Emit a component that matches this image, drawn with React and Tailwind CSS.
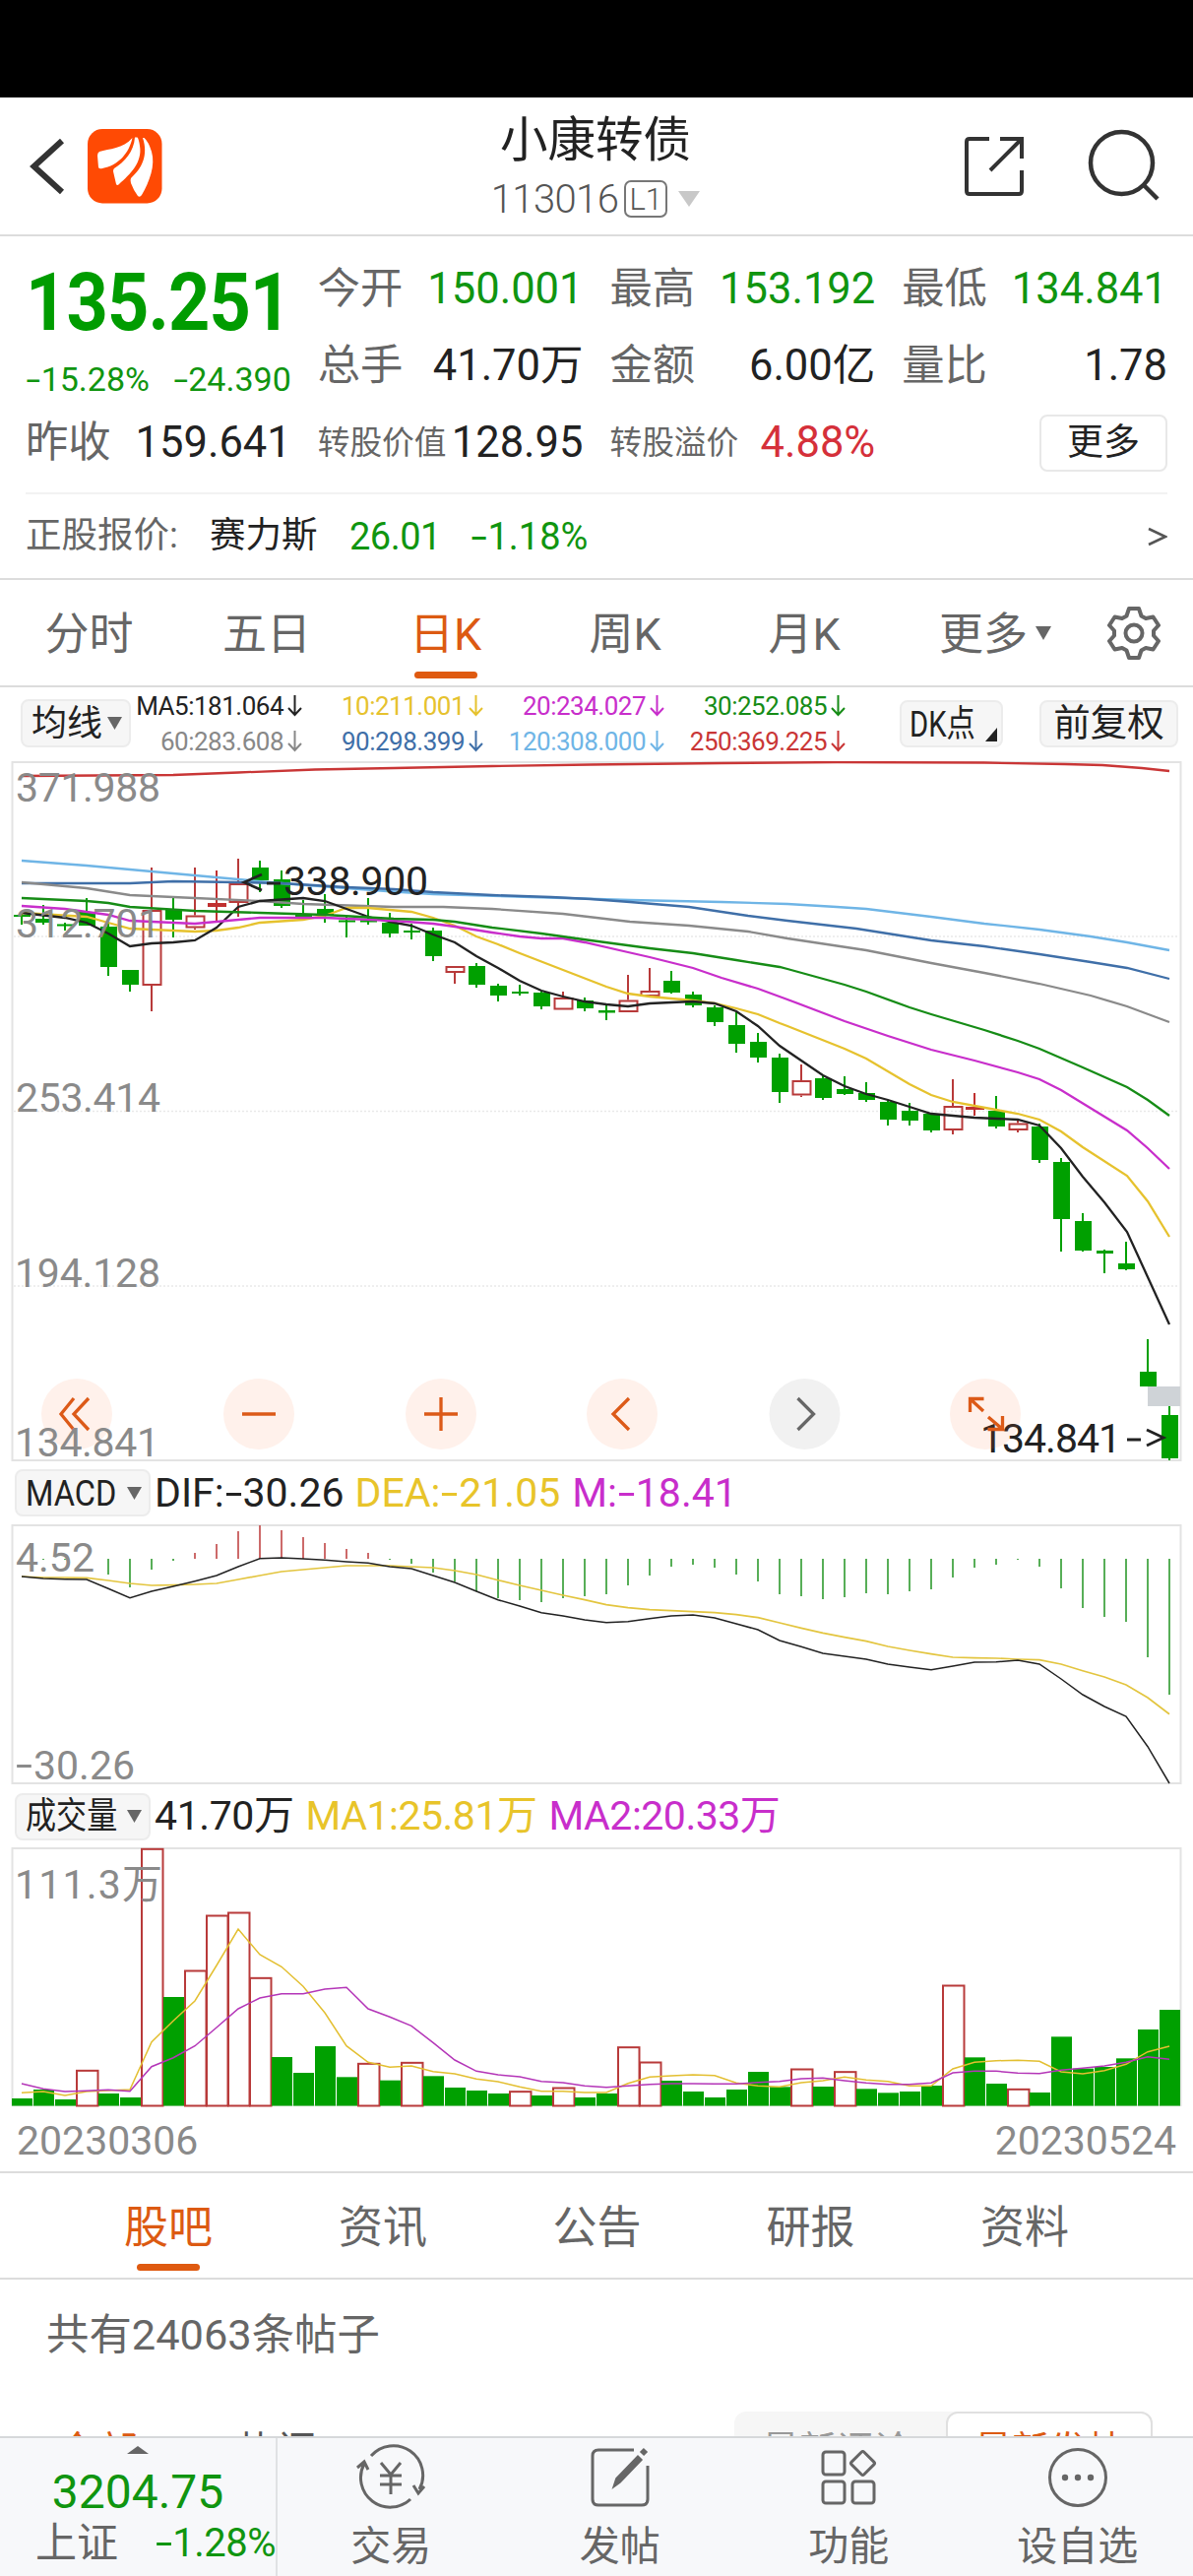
import React from "react";

const GREEN = "#00a000";
const RED = "#b83a3a";

const bx = (i) => 22 + 22 * i;

// [kind, high, bodyTop, bodyBottom, low]; kinds: g = falling, r = hollow rising, s = flat rising
const CANDLES = [
  ["g", 928, 929, 931, 939], ["g", 919, 933, 937, 939], ["g", 937, 938.5, 940.5, 945], ["g", 912, 926, 940, 940],
  ["g", 938, 941, 982, 991], ["g", 985, 985, 1000, 1007], ["r", 881, 924, 1001, 1027], ["g", 911, 923, 934, 952],
  ["r", 881, 929.5, 942.5, 944], ["s", 884, 917, 921, 935], ["r", 872, 897, 917, 931], ["g", 874, 881, 894, 906],
  ["g", 884, 893, 920, 922], ["g", 914, 929, 931, 931], ["g", 908, 923, 930, 937], ["g", 930, 934.5, 936.5, 952],
  ["g", 912, 934.5, 936.5, 939], ["g", 927, 937, 948, 952], ["g", 938, 945, 947, 954], ["g", 942, 945, 971, 976],
  ["r", 981, 981, 988, 999], ["g", 978, 981, 1000, 1003], ["g", 999, 1001, 1011, 1017], ["g", 1000, 1007, 1009, 1011],
  ["g", 1007, 1008, 1022, 1025], ["r", 1007, 1013, 1025.5, 1025], ["g", 1013, 1016, 1024, 1027], ["g", 1020, 1026, 1028.5, 1036],
  ["r", 990, 1015.5, 1028, 1027], ["r", 983, 1006, 1012, 1011], ["g", 986, 996, 1008, 1009], ["g", 1007, 1010, 1021, 1023],
  ["g", 1021, 1023, 1038, 1042], ["g", 1028, 1041, 1060, 1069], ["g", 1049, 1058, 1074, 1079], ["g", 1070, 1074, 1109, 1120],
  ["r", 1081, 1097, 1112.5, 1114], ["g", 1093, 1095, 1115, 1117], ["g", 1093, 1106, 1111, 1112], ["g", 1099, 1110, 1117, 1119],
  ["g", 1118, 1119, 1137, 1143], ["g", 1120, 1128, 1138, 1143], ["g", 1130, 1131, 1148, 1150], ["r", 1096, 1123, 1148, 1152],
  ["s", 1110, 1124, 1127, 1133], ["g", 1113, 1128, 1144, 1146], ["r", 1138, 1140.5, 1148, 1150], ["g", 1141, 1144, 1178, 1181],
  ["g", 1176, 1180, 1238, 1271], ["g", 1232, 1240, 1270, 1271], ["g", 1269, 1270, 1273, 1293], ["g", 1261, 1283, 1289, 1290],
  ["g", 1360, 1393, 1408, 1408], ["g", 1428, 1437, 1481, 1483],
];

const MA_LINES = [
  ["#c93636", "22,788 176,787 242,784.5 320,781.5 400,780 500,778 600,776.5 733,775 850,774 1000,774.5 1082,776 1120,777 1160,780 1188,783"],
  ["#6fb5e6", "22,874 88,879 132,883 198,889 242,893 286,897 352,902 400,905.5 440,908 540,911 640,914 733,916 800,918 850,921 880,923 946,931 1000,938 1056,944 1108,951 1145,957 1188,965"],
  ["#3f6fa8", "22,897 132,897 176,895 242,896 286,897 352,901 400,903 440,906 500,909 560,911 600,913 640,916 700,921 760,930 800,935 870,943 946,955 1000,961 1056,969 1108,977 1145,983 1188,994"],
  ["#8a8a8a", "22,896 66,900 88,902 132,909 198,912 264,915 308,918 400,921 450,921 500,923 572,928 640,936 700,940 760,946 800,953 880,965 946,978 1000,988 1056,999 1108,1011 1145,1022 1188,1038"],
  ["#e6c22e", "22,927 88,931 110,937 132,943 176,945 198,946 220,945 242,942 264,937 308,934 330,930 352,922 374,922 418,926 440,932 462,940 484,951 506,959 528,968 572,985 616,1002 638,1009 660,1012 704,1016 726,1019 748,1024 770,1030 792,1039 800,1042 858,1065 880,1075 924,1101 946,1112 968,1119 1012,1127 1034,1131 1056,1137 1078,1149 1100,1165 1145,1194 1166,1220 1188,1256"],
  ["#222", "22,927 66,932 88,937 110,948 132,961 154,958 176,957 198,955 220,942 242,921 264,915 308,912 330,915 352,923 374,931 396,936 418,940 440,949 462,957 484,971 506,983 528,996 550,1006 572,1012 594,1017 616,1020 638,1022 660,1019 682,1018 704,1017 726,1019 748,1027 770,1042 792,1062 814,1077 836,1092 858,1103 880,1111 902,1117 924,1124 946,1131 968,1133 990,1135 1034,1137 1056,1143 1078,1166 1100,1195 1122,1221 1145,1251 1188,1345"],
  ["#c82ecb", "22,920 66,923 110,929 132,935 198,938 220,936 264,932 330,932 400,935 440,938 462,941 500,947 528,951 550,953 572,953 594,957 638,967 660,972 704,983 733,993 770,1004 800,1015 858,1037 902,1052 946,1066 990,1077 1034,1089 1056,1096 1078,1107 1145,1148 1166,1166 1188,1187"],
  ["#168c16", "22,912 88,915 110,917 132,921 198,925 264,927 330,929 400,933 440,934 462,936 500,942 550,948 600,955 660,963 704,968 748,975 792,982 800,984 858,1000 880,1007 924,1023 946,1030 1000,1046 1034,1057 1056,1065 1100,1084 1145,1104 1166,1117 1188,1133"],
];

const HIST = [
  1584, 1584, 1584, 1584, 1599, 1612, 1594, 1585, 1577, 1568, 1555, 1549, 1554, 1561, 1567, 1573, 1577, 1584, 1588, 1597,
  1606, 1616, 1623, 1625, 1627, 1623, 1621, 1619, 1610, 1600, 1591, 1589, 1592, 1599, 1606, 1619, 1621, 1624, 1622, 1618,
  1619, 1616, 1614, 1602, 1592, 1589, 1584, 1591, 1613, 1633, 1642, 1647, 1683, 1721,
];
const DIF = [
  213, 219, 221, 222, 250, 278, 258, 243, 227, 210, 183, 158, 156, 159, 163, 168, 172, 183, 189, 210, 231, 258, 284, 303, 323,
  333, 345, 353, 350, 341, 333, 330, 339, 357, 375, 408, 427, 447, 456, 465, 480, 489, 497, 486, 474, 473, 468, 480, 525, 573,
  609, 639, 731, 843,
];
const DEA = [
  213, 216, 216, 217, 225, 234, 240, 239, 237, 234, 222, 210, 198, 192, 186, 180, 180, 180, 183, 186, 195, 207, 224, 240, 255,
  270, 284, 299, 308, 314, 317, 320, 323, 329, 338, 354, 370, 385, 398, 410, 426, 438, 449, 459, 461, 462, 465, 467, 480, 500,
  519, 543, 582, 632,
];
const VOL = [
  933, 906, 936, 847, 918, 930, 172, 624, 543, 375, 366, 565, 807, 855, 774, 868, 826, 878, 823, 865, 900, 909, 918, 911, 924,
  900, 930, 918, 776, 822, 879, 912, 930, 906, 852, 898, 843, 897, 851, 904, 916, 912, 894, 588, 808, 888, 904, 915, 745, 842,
  837, 811, 723, 663,
];
const VOL_UP = [3, 6, 8, 9, 10, 11, 16, 18, 23, 25, 28, 29, 36, 38, 43, 46];
const VMA1 = [
  916, 912, 924, 912, 909, 906, 761, 697, 636, 528, 417, 495, 532, 592, 672, 773, 823, 838, 834, 851, 858, 874, 882, 898, 911,
  911, 915, 915, 887, 868, 864, 861, 863, 886, 895, 898, 885, 879, 868, 877, 881, 895, 895, 843, 823, 818, 817, 820, 852, 858,
  848, 829, 791, 774,
];
const VMA2 = [
  888, 904, 912, 910, 907, 911, 836, 809, 773, 717, 660, 627, 614, 614, 600, 595, 660, 685, 712, 763, 816, 850, 861, 867, 881,
  885, 895, 899, 895, 890, 888, 888, 889, 889, 884, 881, 873, 871, 879, 886, 890, 890, 886, 855, 850, 850, 856, 857, 847, 841,
  834, 823, 806, 814,
];
const series = (arr, base) => arr.map((v, i) => `${bx(i)},${(base + v / 3).toFixed(1)}`).join(" ");

// Number text whose minus sign is drawn wider than the font's hyphen
const Num = ({ children }) => {
  const [head, tail] = children.split("-");
  if (tail === undefined) return children;
  return (
    <>
      {head}
      <span className="inline-block w-[0.46em] scale-x-[1.55] text-center">-</span>
      {tail}
    </>
  );
};

function Header() {
  return (
    <header className="flex h-[141px] items-center border-b-2 border-[#dcdcdc] bg-white">
      <div className="flex w-[300px] items-center pl-[28px]">
        <svg width="40" height="60" viewBox="28 139 40 60" fill="none" stroke="#333" strokeWidth="6">
          <path d="M63 143 L34.500 169 L63 195" />
        </svg>
        <svg className="ml-[21px]" width="76" height="76" viewBox="0 0 76 76">
          <rect width="75.500" height="75.500" rx="15" fill="#ff4a04" />
          <path d="M45.500 9 C36 20 22 20 12 23 Q10 24 10 27 L11 39 Q12 41 15 40 C31 37 42 25 45.500 9 Z" fill="#fff" />
          <path d="M48 8.500 C47 23 38 33 27 40 Q26 41 26 43 L29 56 Q30 58 32 56 C43 46 56 34 53 17 Q52 10 50.500 8.500 Z" fill="#fff" />
          <path d="M56 9 C62 27 55 40 44 50 Q43 52 44 55 Q47 63 51 68 Q53 70 55 67 C63 53 69 37 65 23 Q62 13 57.500 9 Z" fill="#fff" />
        </svg>
      </div>
      <div className="flex flex-1 flex-col items-center pt-[4px]">
        <div className="text-[48.500px] leading-[56px] text-[#222]">小康转债</div>
        <div className="mt-[7px] flex h-[48px] items-center">
          <span className="pt-[2px] text-[40px] font-light leading-none tracking-[-0.6px] text-[#555]">113016</span>
          <span className="ml-[6px] flex h-[38px] w-[44px] items-center justify-center rounded-[7px] border-2 border-[#777] text-[31px] font-light leading-none text-[#555]">L1</span>
          <svg className="ml-[11px]" width="22" height="16" viewBox="0 0 22 16"><path d="M0 0H22L11 16Z" fill="#c8c8c8" /></svg>
        </div>
      </div>
      <div className="flex w-[302px] items-center justify-end pr-[31px]">
        <svg width="64" height="64" viewBox="978 137 64 64" fill="none" stroke="#333" strokeWidth="4">
          <path d="M1005 141 H985 Q982 141 982 144 V194 Q982 197 985 197 H1035 Q1038 197 1038 194 V173 M1016 141 H1038 V161 M1037 142 L1006 173" />
        </svg>
        <svg className="ml-[63px]" width="76" height="76" viewBox="1104 131 76 76" fill="none" stroke="#333" strokeWidth="4.500">
          <circle cx="1138.500" cy="165.500" r="31.500" />
          <path d="M1161 188 L1175 202" />
        </svg>
      </div>
    </header>
  );
}

const Quote = ({ label, value, tone = "text-[#222]", small }) => (
  <div className="flex h-[78px] items-center justify-between whitespace-nowrap">
    <span className={small ? "text-[32.700px] text-[#666]" : "text-[43.300px] text-[#666]"}>{label}</span>
    <span className={`text-[43.500px] ${tone}`}>{value}</span>
  </div>
);

function Quotes() {
  const g = "text-[#109510]";
  return (
    <section className="grid h-[260px] grid-cols-4 content-start gap-x-[27px] pl-[26px] pr-[26px] pt-[15px] leading-none">
      <div>
        <div className="flex h-[104px] items-center">
          <span className="w-[300px] origin-left scale-x-[0.912] whitespace-nowrap text-[81px] font-bold tracking-[-1px] text-[#009c00]">135.251</span>
        </div>
        <div className="flex h-[52px] items-center justify-between whitespace-nowrap text-[34px] text-[#109510]">
          <span><Num>-15.28%</Num></span>
          <span><Num>-24.390</Num></span>
        </div>
        <Quote label="昨收" value="159.641" />
      </div>
      <div>
        <Quote label="今开" value="150.001" tone={g} />
        <Quote label="总手" value="41.70万" />
        <Quote label="转股价值" value="128.95" small />
      </div>
      <div>
        <Quote label="最高" value="153.192" tone={g} />
        <Quote label="金额" value="6.00亿" />
        <Quote label="转股溢价" value="4.88%" tone="text-[#d5303a]" small />
      </div>
      <div>
        <Quote label="最低" value="134.841" tone={g} />
        <Quote label="量比" value="1.78" />
        <div className="flex h-[78px] items-center justify-end">
          <span className="flex h-[58px] w-[130px] items-center justify-center rounded-[8px] border-2 border-[#e8e8e8] pb-[2px] text-[37px] text-[#222]">更多</span>
        </div>
      </div>
    </section>
  );
}

function Underlying() {
  return (
    <section className="h-[89px] border-b-2 border-[#dcdcdc] px-[26px] leading-none">
      <div className="flex h-full items-center border-t-2 border-[#f2f2f2]">
        <span className="w-[187px] text-[36.500px] text-[#666]">正股报价:</span>
        <span className="w-[142px] text-[36.500px] text-[#222]">赛力斯</span>
        <span className="w-[123px] text-[38px] tracking-[-0.5px] text-[#109510]">26.01</span>
        <span className="text-[38px] text-[#109510]"><Num>-1.18%</Num></span>
        <svg className="ml-auto" width="20" height="20" viewBox="0 0 20 20" fill="none" stroke="#555" strokeWidth="2.500"><path d="M1 2 L18 10 L1 18" /></svg>
      </div>
    </section>
  );
}

function PeriodTabs() {
  const items = [["分时", "w-[181px]"], ["五日", "w-[180px]"], ["日K", "w-[183px]"], ["周K", "w-[182px]"], ["月K", "w-[182px]"]];
  return (
    <nav className="flex h-[109px] border-b-2 border-[#dcdcdc] leading-none text-[#666]">
      {items.map(([t, w]) => (
        <div key={t} className={`relative flex items-center justify-center pt-[3px] text-[45px] ${w} ${t === "日K" ? "text-[#dc5a12]" : ""}`}>
          {t}
          {t === "日K" && <span className="absolute bottom-[7px] left-1/2 h-[7px] w-[64px] -translate-x-1/2 rounded-full bg-[#df5a10]" />}
        </div>
      ))}
      <div className="flex w-[217px] items-center pl-[46px]">
        <span className="pt-[3px] text-[45px]">更多</span>
        <svg className="ml-[8px]" width="16" height="14" viewBox="0 0 16 14"><path d="M0 0H16L8 14Z" fill="#666" /></svg>
      </div>
      <div className="flex items-center">
        <svg width="54" height="56" viewBox="-27 -28 54 56" fill="none" stroke="#666" strokeWidth="4" strokeLinejoin="round">
          <path d="M-5 -25 H5 L7.500 -17.500 L12 -15 L19.500 -16.500 L25 -8 L20 -2.500 V2.500 L25 8 L19.500 16.500 L12 15 L7.500 17.500 L5 25 H-5 L-7.500 17.500 L-12 15 L-19.500 16.500 L-25 8 L-20 2.500 V-2.500 L-25 -8 L-19.500 -16.500 L-12 -15 L-7.500 -17.500 Z" />
          <circle r="8.500" />
        </svg>
      </div>
    </nav>
  );
}

const Arrow = () => (
  <svg className="ml-[4px] shrink-0" width="15" height="22" viewBox="0 0 15 22" fill="none" stroke="currentColor" strokeWidth="2"><path d="M7.500 0 V20 M1 13 L7.500 20 L14 13" /></svg>
);

function MaBar() {
  const cols = [
    [["MA5:181.064", "text-[#222]"], ["60:283.608", "text-[#888]"]],
    [["10:211.001", "text-[#e6c22e]"], ["90:298.399", "text-[#3f6fa8]"]],
    [["20:234.027", "text-[#c82ecb]"], ["120:308.000", "text-[#6fb5e6]"]],
    [["30:252.085", "text-[#168c16]"], ["250:369.225", "text-[#c93636]"]],
  ];
  return (
    <section className="flex h-[76px] items-start pl-[21px] leading-none">
      <div className="mt-[13px] flex h-[49px] w-[112px] items-center rounded-[8px] border-2 border-[#ececec] bg-[#f6f6f6] pl-[9px] text-[36px] text-[#222]">
        均线
        <svg className="ml-[5px]" width="15" height="13" viewBox="0 0 15 13"><path d="M0 0H15L7.500 13Z" fill="#666" /></svg>
      </div>
      <div className="flex pt-[2px]">
        {cols.map((c, k) => (
          <div key={k} className={k === 0 ? "w-[174px]" : "w-[184px]"}>
            {c.map(([t, tone]) => (
              <div key={t} className={`flex h-[36px] items-center justify-end whitespace-nowrap text-[26px] tracking-[-0.5px] ${tone}`}>
                {t}
                <Arrow />
              </div>
            ))}
          </div>
        ))}
      </div>
      <div className="relative ml-[55px] mt-[14px] flex h-[48px] w-[105px] items-center rounded-[8px] border-2 border-[#ececec] bg-[#f6f6f6] pl-[8px] text-[37px] text-[#222]">
        <span className="origin-left scale-x-[0.79] whitespace-nowrap">DK点</span>
        <svg className="absolute bottom-[4px] right-[4px]" width="12" height="14" viewBox="0 0 12 14"><path d="M12 0V14H0Z" fill="#222" /></svg>
      </div>
      <div className="ml-[37px] mt-[14px] flex h-[48px] w-[141px] items-center justify-center rounded-[8px] border-2 border-[#ececec] bg-[#f6f6f6] text-[37.500px] text-[#222]">前复权</div>
    </section>
  );
}

const ChartText = (p) => <text fontSize="41" fill="#8a8a8a" {...p} />;

function RoundButton({ cx, gray, children }) {
  return (
    <g>
      <circle cx={cx} cy="1436" r="36" fill={gray ? "#f1f1f1" : "#fff1eb"} />
      <g transform={`translate(${cx} 1436)`} fill="none" stroke={gray ? "#666" : "#dc5a18"} strokeWidth="3.300">{children}</g>
    </g>
  );
}

function ExpandButton() {
  return (
    <g>
      <circle cx="1001" cy="1436" r="36" fill="#ff6a30" fillOpacity="0.100" />
      <path d="M985.500 1434V1420.500H999.500M986 1421L999 1433M1018.500 1438V1451.500H1003.500M1018 1451L1004 1439" fill="none" stroke="#dc5a18" strokeWidth="3.300" />
    </g>
  );
}

function KChart() {
  return (
    <svg className="block" width="1212" height="711" viewBox="0 773 1212 711">
      <rect x="12.500" y="774" width="1187" height="709" fill="none" stroke="#e3e3e3" strokeWidth="2" />
      {[951, 1128.5, 1306].map((y) => <path key={y} d={`M14 ${y}H1198`} stroke="#e9e9e9" strokeWidth="1.500" strokeDasharray="2 2" />)}
      <RoundButton cx={78}><path d="M-3 -16 L-16 0 L-3 16 M12 -16 L-3 0 L12 16" /></RoundButton>
      <RoundButton cx={263}><path d="M-17 0H17" /></RoundButton>
      <RoundButton cx={448}><path d="M-17 0H17M0 -17V17" /></RoundButton>
      <RoundButton cx={632}><path d="M7 -16 L-9 0 L7 16" /></RoundButton>
      <RoundButton cx={817.5} gray><path d="M-7 -16 L9 0 L-7 16" /></RoundButton>
      {CANDLES.map(([k, h, t, b, l], i) => {
        const x = bx(i);
        if (k === "r")
          return (
            <g key={i} stroke={RED} strokeWidth="2" fill="none">
              <path d={`M${x} ${h}V${t}M${x} ${b}V${Math.max(b, l)}`} />
              <rect x={x - 8.5} y={t + 1} width="18" height={b - t - 2} />
            </g>
          );
        const c = k === "g" ? GREEN : "#c03030";
        return (
          <g key={i} fill={c}>
            <rect x={x - 1} y={h} width="2" height={l - h} />
            <rect x={k === "g" ? x - 8 : x - 9} y={t} width={k === "g" ? 17 : 19} height={b - t} />
          </g>
        );
      })}
      {MA_LINES.map(([c, pts]) => <polyline key={c} points={pts} fill="none" stroke={c} strokeWidth="2.300" />)}
      <rect x="1166" y="1408" width="33" height="20" fill="#cfd3d7" />
      <ChartText x="16" y="814" textLength="147">371.988</ChartText>
      <ChartText x="16" y="952" textLength="147">312.701</ChartText>
      <ChartText x="16" y="1129" textLength="147">253.414</ChartText>
      <ChartText x="15" y="1307" textLength="148">194.128</ChartText>
      <ChartText x="15" y="1479" textLength="147">134.841</ChartText>
      <path d="M266 888 L248 896 L266 904 M271 897H285" fill="none" stroke="#222" strokeWidth="2.800" />
      <ChartText x="288" y="909" fill="#222" textLength="147">338.900</ChartText>
      <ChartText x="996" y="1475" fill="#222" textLength="143">134.841</ChartText>
      <path d="M1145 1462H1159 M1165 1452 L1182 1460 L1165 1468" fill="none" stroke="#222" strokeWidth="2.800" />
      <ExpandButton />
    </svg>
  );
}

function IndicatorBar({ name, scale, items, className }) {
  return (
    <section className={`flex items-center pl-[15px] leading-none ${className}`}>
      <div className="flex h-[48px] w-[138px] items-center rounded-[8px] border-2 border-[#ececec] bg-[#f6f6f6] text-[37px] text-[#222]">
        <span className={`ml-[9px] w-[103px] shrink-0 origin-left whitespace-nowrap ${scale}`}>{name}</span>
        <svg className="shrink-0" width="15" height="13" viewBox="0 0 15 13"><path d="M0 0H15L7.500 13Z" fill="#666" /></svg>
      </div>
      {items.map(([t, c]) => <span key={t} className={`whitespace-nowrap text-[41px] ${c}`}><Num>{t}</Num></span>)}
    </section>
  );
}

function MacdChart() {
  return (
    <svg className="block" width="1212" height="265" viewBox="0 1548 1212 265">
      <rect x="12.500" y="1549" width="1187" height="262" fill="none" stroke="#e3e3e3" strokeWidth="2" />
      {HIST.map((y, i) => <path key={i} d={`M${bx(i)} 1583V${y}`} stroke={y < 1583 ? "#c45050" : "#3aa03a"} strokeWidth="1.700" />)}
      <polyline points={series(DEA, 1530)} fill="none" stroke="#e3c53f" strokeWidth="1.700" />
      <polyline points={series(DIF, 1530)} fill="none" stroke="#222" strokeWidth="1.500" />
      <ChartText x="16" y="1596">4.52</ChartText>
      <g transform="translate(16 1806) scale(1.5 1)"><ChartText x="0" y="0">-</ChartText></g>
      <ChartText x="34" y="1807">30.26</ChartText>
    </svg>
  );
}

function VolumeChart() {
  return (
    <svg className="block" width="1212" height="264" viewBox="0 1876 1212 264">
      <rect x="12.500" y="1877" width="1187" height="261" fill="none" stroke="#e3e3e3" strokeWidth="2" />
      {VOL.map((v, i) => {
        const y = 1820 + v / 3;
        return VOL_UP.includes(i) ? (
          <rect key={i} x={bx(i) - 10} y={y + 0.5} width="21.500" height={2138 - y} fill="#fff" stroke={RED} strokeWidth="2" />
        ) : (
          <rect key={i} x={bx(i) - 10} y={y} width="21" height={2138.5 - y} fill={GREEN} />
        );
      })}
      <polyline points={series(VMA1, 1820)} fill="none" stroke="#e3bf31" strokeWidth="1.500" />
      <polyline points={series(VMA2, 1820)} fill="none" stroke="#b436b8" strokeWidth="1.500" />
      <ChartText x="15" y="1928" textLength="150">111.3万</ChartText>
    </svg>
  );
}

function InfoTabs() {
  const items = [["股吧", "w-[218px]"], ["资讯", "w-[218px]"], ["公告", "w-[217px]"], ["研报", "w-[217px]"], ["资料", "w-[218px]"]];
  return (
    <nav className="flex h-[108px] border-b-2 border-[#dcdcdc] pl-[62px] leading-none text-[#666]">
      {items.map(([t, w], i) => (
        <div key={t} className={`relative flex items-center justify-center pt-[4px] text-[45px] ${w} ${i === 0 ? "text-[#dc5a12]" : ""}`}>
          {t}
          {i === 0 && <span className="absolute bottom-[7px] left-1/2 h-[7px] w-[64px] -translate-x-1/2 rounded-full bg-[#df5a10]" />}
        </div>
      ))}
    </nav>
  );
}

function Posts() {
  return (
    <section className="h-[159px] overflow-hidden leading-none">
      <div className="flex h-[112px] items-center pl-[47px] pt-[2px] text-[43.400px] text-[#666]">共有24063条帖子</div>
      <div className="mt-[22px] flex items-start pl-[58px]">
        <span className="pt-[21px] text-[41px] text-[#dc5a12]">全部</span>
        <span className="ml-[100px] pt-[21px] text-[41px] text-[#555]">热门</span>
        <div className="ml-auto mr-[41px] flex h-[70px] rounded-[12px] bg-[#f6f6f6] text-[38px]">
          <span className="w-[215px] pl-[28px] pt-[20px] text-[#999]">最新评论</span>
          <span className="w-[210px] rounded-[12px] border-2 border-[#e0e0e0] bg-white pl-[27px] pt-[18px] text-[#dc5a12]">最新发帖</span>
        </div>
      </div>
    </section>
  );
}

const NAV = [
  ["交易", (
    <g key="a">
      <path d="M-20 -22 A30 30 0 0 1 29 12 M34 9 L28 16 L23 8 M20 22 A30 30 0 0 1 -27 -14 M-34 -10 L-27 -16 L-23 -8" />
      <path d="M-10 -15 L0 -3 L10 -15 M0 -3 V17 M-11 -2 H11 M-11 7 H11" />
    </g>
  )],
  ["发帖", (
    <g key="b">
      <path d="M14 -28 H-22 Q-28 -28 -28 -22 V22 Q-28 28 -22 28 H22 Q28 28 28 22 V-12" />
      <path d="M-7 10 L-4 1 L18 -22 L22 -18 L0 5 Z" fill="#666" strokeWidth="1.500" />
      <path d="M22 -24 L26 -28" strokeWidth="6" />
    </g>
  )],
  ["功能", (
    <g key="c">
      <rect x="-26" y="-26" width="22" height="23" rx="3" />
      <rect x="-26" y="4" width="22" height="22" rx="3" />
      <rect x="4" y="4" width="22" height="22" rx="3" />
      <rect x="5.500" y="-23.500" width="18" height="18" rx="2" transform="rotate(45 14.500 -14.500)" />
    </g>
  )],
  ["设自选", (
    <g key="d">
      <circle r="28.500" />
      <g fill="#666" stroke="none"><circle cx="-13" r="3.200" /><circle r="3.200" /><circle cx="13" r="3.200" /></g>
    </g>
  )],
];

function BottomBar() {
  return (
    <footer className="flex h-[142px] border-t-2 border-[#d6d8da] bg-[#f7f8fa] leading-none text-[#666]">
      <div className="flex w-[282px] flex-col items-center border-r-2 border-[#e0e2e4] pt-[8px]">
        <svg width="22" height="8" viewBox="0 0 22 8"><path d="M11 0L22 8H0Z" fill="#666" /></svg>
        <div className="mt-[15px] text-[48px] text-[#109510]">3204.75</div>
        <div className="mt-[6px] flex h-[44px] w-full items-center justify-between whitespace-nowrap pl-[36px]">
          <span className="text-[42px]">上证</span>
          <span className="text-[40px] tracking-[-0.5px] text-[#109510]"><Num>-1.28%</Num></span>
        </div>
      </div>
      {NAV.map(([t, icon]) => (
        <div key={t} className="flex flex-1 flex-col items-center pr-[2px] pt-[4px]">
          <svg width="72" height="72" viewBox="-36 -36 72 72" fill="none" stroke="#666" strokeWidth="3">{icon}</svg>
          <div className="mt-[14px] text-[41px]">{t}</div>
        </div>
      ))}
    </footer>
  );
}

export default function App() {
  return (
    <div className="h-[2616px] w-[1212px] overflow-hidden bg-white font-['Roboto','Noto_Sans_CJK_SC',sans-serif]">
      <div className="h-[99px] bg-black" />
      <Header />
      <Quotes />
      <Underlying />
      <PeriodTabs />
      <div className="-mt-px">
        <MaBar />
      </div>
      <KChart />
      <IndicatorBar
        className="h-[64px]"
        name="MACD"
        scale="scale-x-[0.88]"
        items={[["DIF:-30.26", "ml-[4px] text-[#222]"], ["DEA:-21.05", "ml-[11px] text-[#e8c42a]"], ["M:-18.41", "ml-[12px] text-[#c82ecb]"]]}
      />
      <MacdChart />
      <IndicatorBar
        className="h-[63px]"
        name="成交量"
        scale="scale-x-[0.84]"
        items={[["41.70万", "ml-[4px] tracking-[-0.4px] text-[#222]"], ["MA1:25.81万", "ml-[12px] tracking-[-0.5px] text-[#e8c42a]"], ["MA2:20.33万", "ml-[12px] tracking-[-0.5px] text-[#c82ecb]"]]}
      />
      <VolumeChart />
      <div className="flex h-[67px] items-center justify-between border-b-2 border-[#dcdcdc] px-[17px] pt-[3px] text-[41px] leading-none text-[#8a8a8a]">
        <span>20230306</span>
        <span>20230524</span>
      </div>
      <InfoTabs />
      <Posts />
      <BottomBar />
    </div>
  );
}
